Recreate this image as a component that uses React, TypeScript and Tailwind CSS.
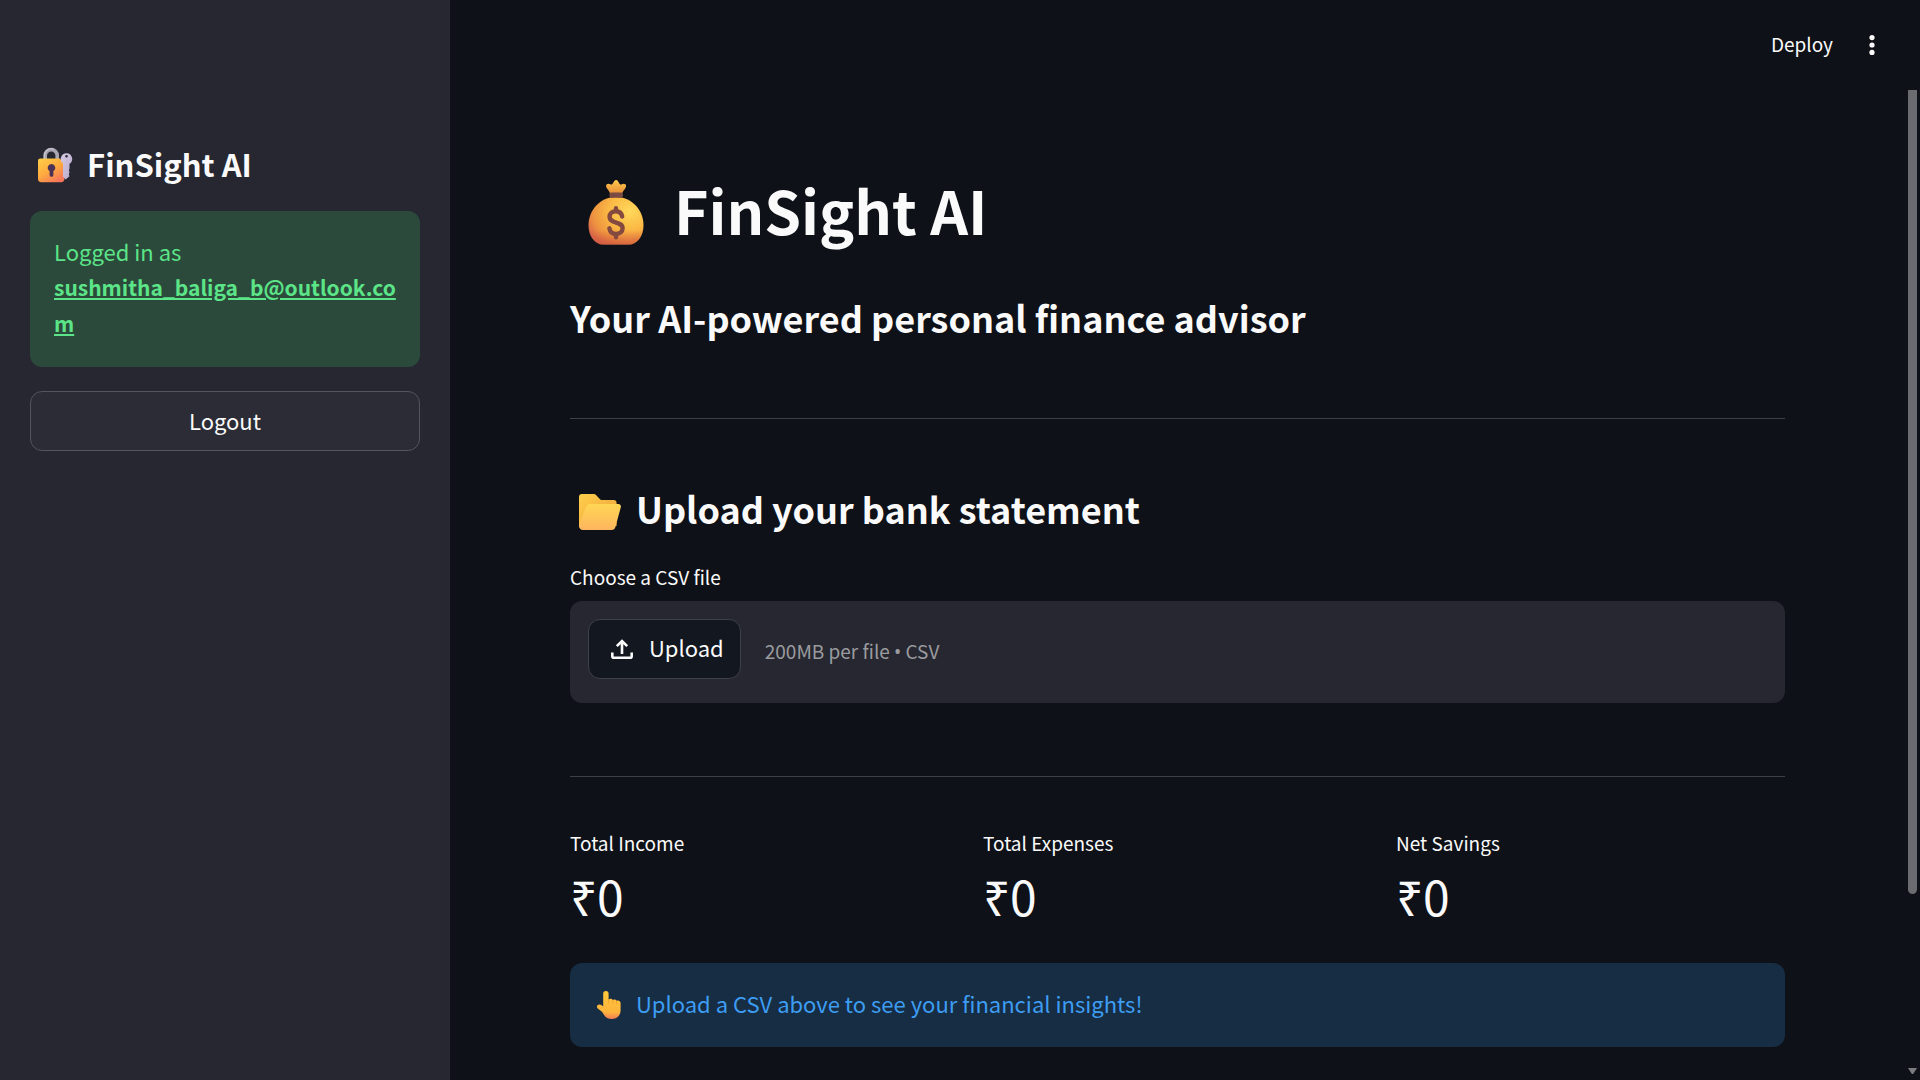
import { useRef } from "react";

function LockKeyIcon({ className }: { className: string }) {
  return (
    <svg viewBox="0 0 36 36" className={className} aria-hidden="true">
      <defs>
        <linearGradient id="lockBody" x1="0" y1="0" x2="0.7" y2="1">
          <stop offset="0" stopColor="#ffd147" />
          <stop offset="0.55" stopColor="#fdaa3f" />
          <stop offset="1" stopColor="#f6765a" />
        </linearGradient>
        <linearGradient id="lockKey" x1="0" y1="0" x2="1" y2="1">
          <stop offset="0" stopColor="#d6cae4" />
          <stop offset="1" stopColor="#b8a9cc" />
        </linearGradient>
      </defs>
      <path d="M8.2 14V8.6a6 6 0 0 1 12 0V14" fill="none" stroke="#a9a5b3" strokeWidth="3.6" />
      <path d="M7.4 12V8.4a6.8 6.8 0 0 1 9.5-6.1" fill="none" stroke="#c6c2cf" strokeWidth="1.2" />
      <path d="M3.4 11.4h19.4l4.6 6.2v14.2a3.4 3.4 0 0 1-3.4 3.4H4.4A3.4 3.4 0 0 1 1 31.8V13.8a2.4 2.4 0 0 1 2.4-2.4z" fill="url(#lockBody)" />
      <path d="M14.5 17a3.700 3.700 0 0 0-1.900 6.900v4a1.900 1.900 0 0 0 3.800 0v-4a3.700 3.700 0 0 0-1.900-6.900z" fill="#4b3153" />
      <path
        fillRule="evenodd"
        d="M29.500 6.200a5.800 5.800 0 0 0-3.500 10.400v13.200l2.600 2.700 3.900-3.300-.7-1.900.7-2-.6-1.800.6-1.900v-4.700a5.800 5.800 0 0 0-3-10.700zm0 1.700a1.300 1.300 0 1 1 0 2.600 1.300 1.300 0 0 1 0-2.600z"
        fill="url(#lockKey)"
      />
    </svg>
  );
}

function MoneyBagIcon({ className }: { className: string }) {
  return (
    <svg viewBox="0 0 56 65" className={className} aria-hidden="true">
      <defs>
        <radialGradient id="bagBody" cx="0.75" cy="0.3" r="0.85">
          <stop offset="0" stopColor="#ffd95c" />
          <stop offset="0.45" stopColor="#fbb944" />
          <stop offset="0.8" stopColor="#ee9240" />
          <stop offset="1" stopColor="#d9694a" />
        </radialGradient>
        <linearGradient id="bagShade" x1="0" y1="0" x2="0" y2="1">
          <stop offset="0.7" stopColor="#d4593f" stopOpacity="0" />
          <stop offset="1" stopColor="#cf553f" stopOpacity="0.7" />
        </linearGradient>
        <linearGradient id="bagTop" x1="0" y1="0" x2="0" y2="1">
          <stop offset="0" stopColor="#ffc94e" />
          <stop offset="1" stopColor="#e98f37" />
        </linearGradient>
      </defs>
      <path d="M22 13.500c-.5-3-4-5-3.900-7.600.1-2 2.200-2.900 4.200-1.600.9.500 1.700.3 2.300-.6L26.200 1.200c.9-1.600 2.900-1.600 3.800 0l1.500 2.500c.6.900 1.500 1.100 2.400.6 2-1.300 4.200-.4 4.200 1.600 0 2.600-3.300 4.600-3.900 7.600z" fill="url(#bagTop)" />
      <path d="M28 17C12 17 .500 30.500.500 45c0 11.500 6.500 19.500 14.500 19.500h26c8 0 14.500-8 14.500-19.500C55.500 30.500 44 17 28 17z" fill="url(#bagBody)" />
      <path d="M28 17C12 17 .500 30.500.500 45c0 11.500 6.500 19.500 14.500 19.500h26c8 0 14.500-8 14.500-19.500C55.500 30.500 44 17 28 17z" fill="url(#bagShade)" />
      <rect x="21.500" y="12.500" width="13.400" height="5.200" rx="1.800" fill="#7a4a43" />
      <path d="M34.200 36.500c-.7-3.600-3.200-5.300-6.300-5.300-3.600 0-6.300 2.100-6.300 5.500 0 7.700 13 4.100 13 11.600 0 3.500-2.900 5.600-6.600 5.600-3.600 0-6-2-6.600-5.600M28 28.300v3M28 54v3.200" fill="none" stroke="#84493f" strokeWidth="4.400" strokeLinecap="round" />
    </svg>
  );
}

function FolderIcon({ className }: { className: string }) {
  return (
    <svg viewBox="0 0 42 36" className={className} aria-hidden="true">
      <defs>
        <linearGradient id="folderBack" x1="0" y1="0" x2="1" y2="1">
          <stop offset="0" stopColor="#ffcf4d" />
          <stop offset="1" stopColor="#eda036" />
        </linearGradient>
        <linearGradient id="folderFront" x1="0" y1="0" x2="0" y2="1">
          <stop offset="0" stopColor="#ffd755" />
          <stop offset="1" stopColor="#fdb55e" />
        </linearGradient>
      </defs>
      <path d="M3 0h11.800a3 3 0 0 1 2.200.9L21 5.200a3 3 0 0 0 2.200.9h11.400a3 3 0 0 1 3 3V32H4.500L0 31V3a3 3 0 0 1 3-3z" fill="url(#folderBack)" />
      <path d="M13.500 10h25.800a2.500 2.500 0 0 1 2.500 3.200l-5.300 19.600A4.300 4.300 0 0 1 32.400 36H4a4 4 0 0 1-3.900-4.900L7 13a5 5 0 0 1 6.500-3z" fill="url(#folderFront)" />
    </svg>
  );
}

function PointingUpIcon({ className }: { className: string }) {
  return (
    <svg viewBox="0 0 24 28" className={className} aria-hidden="true">
      <defs>
        <linearGradient id="handFill" x1="0" y1="0" x2="0" y2="1">
          <stop offset="0" stopColor="#ffc83a" />
          <stop offset="0.75" stopColor="#fdb43c" />
          <stop offset="1" stopColor="#f07d52" />
        </linearGradient>
      </defs>
      <path d="M8.900 0a2.700 2.700 0 0 1 2.700 2.700v6c.8-1.200 3.400-1.200 4.100.4.900-1 3.300-.7 3.900.8 1.800-.9 4 .1 4 2.500v6.800c0 5.200-3.600 8.800-9 8.800-4.200 0-6.500-1.900-8.300-5.300-.7-1.300-1.800-2.300-3-3.100L1 17.800c-1.300-1-1.300-2.800-.3-3.700 1.200-1.100 2.800-.8 4.100.2l1.400 1.100V2.700A2.700 2.700 0 0 1 8.900 0z" fill="url(#handFill)" />
      <path d="M11.600 8.700v3.500M15.700 9.200v3.200M19.600 10v3" stroke="#ee9a30" strokeWidth="0.700" strokeLinecap="round" />
    </svg>
  );
}

function UploadIcon({ className }: { className: string }) {
  return (
    <svg viewBox="0 0 22 20" className={className} fill="none" stroke="currentColor" strokeWidth="2.600" aria-hidden="true">
      <path d="M11 15V2M5.800 7.200 11 2l5.200 5.200" />
      <path d="M1.300 13.600v3.600a1.500 1.500 0 0 0 1.500 1.500h16.400a1.500 1.500 0 0 0 1.500-1.500v-3.600" />
    </svg>
  );
}

function Sidebar() {
  return (
    <aside className="flex w-[450px] shrink-0 flex-col gap-6 bg-[#262730] px-[30px] pt-[143px]">
      <h2 className="flex h-11 items-center gap-3.5 pl-[7px] text-[31px] leading-10 font-bold">
        <LockKeyIcon className="size-9" />
        <span className="pb-0.5">FinSight AI</span>
      </h2>
      <div className="rounded-xl bg-[#2b4a3b] px-6 pt-[22px] pb-[26px] text-[22px] leading-9 text-[#5ce488]">
        Logged in as
        <a
          href="mailto:sushmitha_baliga_b@outlook.com"
          className="block text-[21px] leading-9 font-bold underline decoration-2 underline-offset-2 wrap-break-word"
        >
          sushmitha_baliga_b@outlook.com
        </a>
      </div>
      <button type="button" className="h-[60px] rounded-xl border border-[#53545d] bg-[#2b2c36] pb-0.5 text-[22px]">
        Logout
      </button>
    </aside>
  );
}

function TopBar() {
  return (
    <header className="flex h-[90px] items-center justify-end gap-[30px] pr-[39px]">
      <button type="button" className="pb-0.5 text-[19px]">
        Deploy
      </button>
      <button type="button" aria-label="Main menu" className="flex w-[18px] justify-center">
        <svg viewBox="0 0 6 20" className="h-5 w-1.5" fill="currentColor" aria-hidden="true">
          <circle cx="3" cy="2.600" r="2.600" />
          <circle cx="3" cy="10" r="2.600" />
          <circle cx="3" cy="17.400" r="2.600" />
        </svg>
      </button>
    </header>
  );
}

function Uploader() {
  const input = useRef<HTMLInputElement>(null);
  return (
    <section>
      <h3 className="flex h-[50px] items-center gap-[15px] pl-[9px] text-[36px] leading-[44px] font-bold">
        <FolderIcon className="h-9 w-[42px]" />
        <span className="pb-2">Upload your bank statement</span>
      </h3>
      <label htmlFor="csv" className="mt-6 block text-[19px] leading-8">
        Choose a CSV file
      </label>
      <div className="mt-2 flex items-start gap-6 rounded-xl bg-[#262730] px-[18px] pt-[18px] pb-6">
        <input ref={input} id="csv" type="file" accept=".csv" className="hidden" />
        <button
          type="button"
          onClick={() => input.current?.click()}
          className="flex h-[60px] items-center gap-4 rounded-xl border border-[#3f4148] bg-[#131720] pr-4 pl-[22px] text-[22px]"
        >
          <UploadIcon className="h-5 w-[22px]" />
          <span className="pb-1">Upload</span>
        </button>
        <span className="pt-4 text-[19px] leading-8 text-[#9a9b9f]">
          200MB per file <span className="font-['Noto_Sans',sans-serif]">•</span> CSV
        </span>
      </div>
    </section>
  );
}

const metrics = [
  { label: "Total Income", value: "₹0" },
  { label: "Total Expenses", value: "₹0" },
  { label: "Net Savings", value: "₹0" },
];

function Scrollbar() {
  return (
    <div className="flex w-[15px] shrink-0 flex-col items-center" aria-hidden="true">
      <div className="w-[9px] grow-[37] rounded-b-full bg-[#6b6c70]" />
      <div className="grow-[8]" />
      <svg viewBox="0 0 9 6" className="mb-1.5 h-1.5 w-[9px]" fill="#7b7c80">
        <path d="M0 0h9L5.500 5.500a1.300 1.300 0 0 1-2 0z" />
      </svg>
    </div>
  );
}

export default function App() {
  return (
    <div className="flex min-h-screen bg-[#0e1117] font-['Noto_Sans_CJK_SC',sans-serif] text-[#fafafa]">
      <Sidebar />
      <div className="flex grow flex-col">
        <TopBar />
        <div className="flex grow">
          <main className="grow px-[120px] pt-[82px] pb-8">
            <h1 className="flex h-20 items-center gap-[30px] pl-[18px] text-[59px] leading-[72px] font-bold">
              <MoneyBagIcon className="h-[65px] w-14" />
              <span className="pb-1">FinSight AI</span>
            </h1>
            <h2 className="mt-10 text-[36px] leading-[50px] font-bold">Your AI-powered personal finance advisor</h2>
            <hr className="mt-[76px] mb-[68px] border-[#3d4045]" />
            <Uploader />
            <hr className="mt-[73px] mb-[50px] border-[#3d4045]" />
            <dl className="grid grid-cols-3 gap-6">
              {metrics.map((m) => (
                <div key={m.label}>
                  <dt className="text-[19px] leading-8">{m.label}</dt>
                  <dd className="mt-1 text-[48px] leading-[64px]">{m.value}</dd>
                </div>
              ))}
            </dl>
            <div role="status" className="mt-9 flex h-[84px] items-center gap-[15px] rounded-xl bg-[#172d43] px-[27px] text-[22px] leading-9 text-[#3d9df3]">
              <PointingUpIcon className="h-7 w-6" />
              <span className="pb-1">Upload a CSV above to see your financial insights!</span>
            </div>
          </main>
          <Scrollbar />
        </div>
      </div>
    </div>
  );
}
